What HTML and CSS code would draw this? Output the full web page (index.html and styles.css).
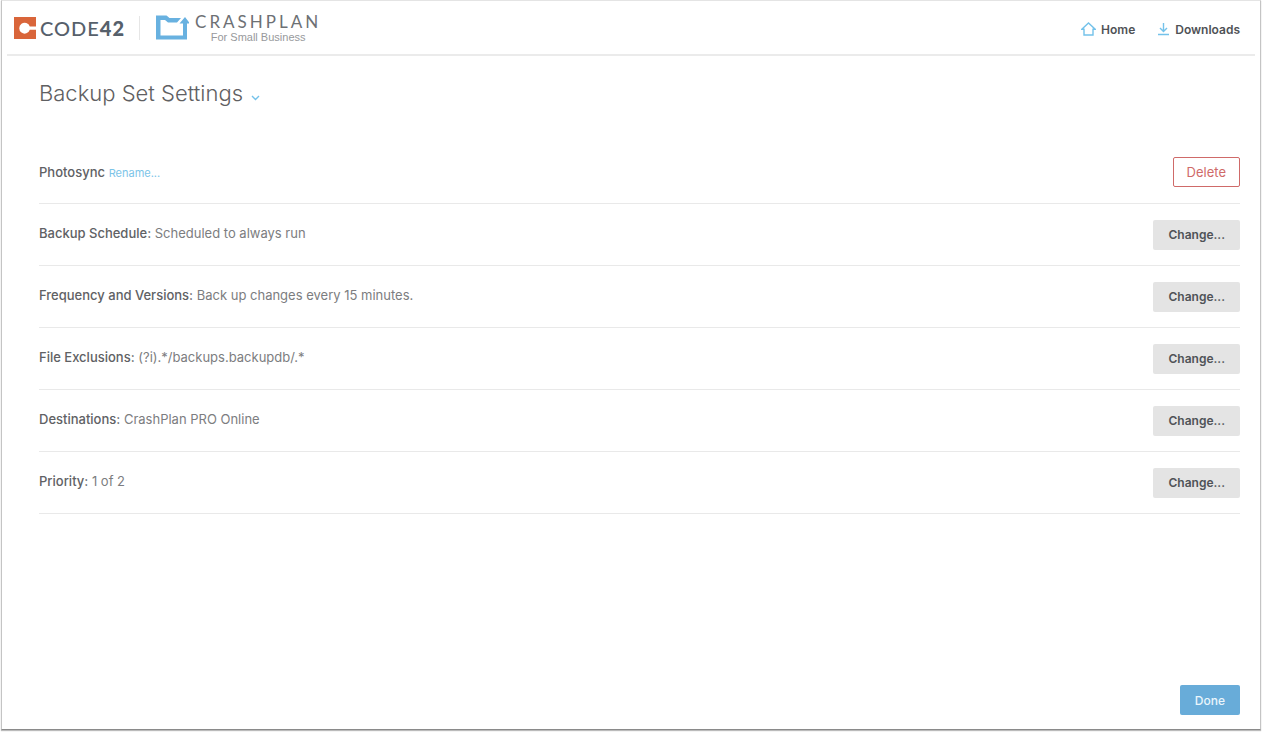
FILE: index.html
```html
<!DOCTYPE html>
<html lang="en">
<head>
  <meta charset="UTF-8" />
  <meta name="viewport" content="width=device-width, initial-scale=1.0"/>
  <title>Backup Set Settings</title>
  <link rel="stylesheet" href="styles.css">
</head>
<body>
  <div class="window">
    <header class="header">
      <div class="brand">
        <a class="code42" href="#">
          <svg width="22" height="22" viewBox="0 0 22 22" aria-hidden="true">
            <path fill="#d9653a" d="M0 0h22v9.6h-6.2a5.4 5.4 0 1 0 0 3.2H22V22H0z"/>
          </svg>
          <span class="code42-name">CODE<b>42</b></span>
        </a>
        <a class="crashplan" href="#">
          <svg width="33" height="25" viewBox="0 0 33 25" aria-hidden="true">
            <path fill="#68b1e0" fill-rule="evenodd" d="M0 .5h10.500l3 2.500H25l-4 4.500h-9l-3-2.500H4.500v15.500h22.500V8.500h-3.500L29 2l5 6.500h-3V24.500H0z"/>
          </svg>
          <span class="crashplan-text">
            <span class="crashplan-name">CRASHPLAN</span>
            <span class="crashplan-sub">For Small Business</span>
          </span>
        </a>
      </div>
      <nav class="nav">
        <a href="#">
          <svg width="15" height="14" viewBox="0 0 15 14" aria-hidden="true">
            <path d="M.8 7.300L7.500 1l6.700 6.300H12V13H3V7.300z"/>
          </svg>
          Home
        </a>
        <a href="#">
          <svg width="13" height="14" viewBox="0 0 13 14" aria-hidden="true">
            <path d="M6.500 1v8.500M3 6l3.500 3.500L10 6M1 12.500h11"/>
          </svg>
          Downloads
        </a>
      </nav>
    </header>

    <main class="content">
      <h1 class="title">
        Backup Set Settings
        <button class="title-menu" type="button" aria-label="Choose backup set">
          <svg width="9" height="6" viewBox="0 0 9 6" aria-hidden="true">
            <path d="M1 1l3.500 3.500L8 1"/>
          </svg>
        </button>
      </h1>

      <!-- Settings of the set, one per row -->
      <ul class="settings">
        <li class="row">
          <p><strong>Photosync</strong> <a class="rename" href="#">Rename...</a></p>
          <button class="btn btn-delete" type="button">Delete</button>
        </li>
        <li class="row">
          <p><strong>Backup Schedule:</strong> Scheduled to always run</p>
          <button class="btn" type="button">Change...</button>
        </li>
        <li class="row">
          <p><strong>Frequency and Versions:</strong> Back up changes every 15 minutes.</p>
          <button class="btn" type="button">Change...</button>
        </li>
        <li class="row">
          <p><strong>File Exclusions:</strong> (?i).*/backups.backupdb/.*</p>
          <button class="btn" type="button">Change...</button>
        </li>
        <li class="row">
          <p><strong>Destinations:</strong> CrashPlan PRO Online</p>
          <button class="btn" type="button">Change...</button>
        </li>
        <li class="row">
          <p><strong>Priority:</strong> 1 of 2</p>
          <button class="btn" type="button">Change...</button>
        </li>
      </ul>

      <div class="footer">
        <button class="btn btn-done" type="button">Done</button>
      </div>
    </main>
  </div>
</body>
</html>
```

FILE: styles.css
```css
* { box-sizing: border-box; }
body {
  margin: 0;
  padding: 0 1px 2px;
  min-height: 100vh;
  display: flex;
  background: #fff;
  font-family: Inter, "Liberation Sans", sans-serif;
  font-size: 13px;
  color: #7c7d80;
}
a { text-decoration: none; }
svg { display: block; flex: none; }
.window {
  flex: 1;
  display: flex;
  flex-direction: column;
  border: 1px solid #c4c4c4;
  border-top-color: #e4e4e4;
  border-bottom-color: #8a8a8a;
  box-shadow: 0 1px 1px #bbb;
}

/* Header */
.header {
  display: flex;
  justify-content: space-between;
  align-items: center;
  height: 55px;
  margin: 0 5px;
  padding: 0 15px 0 7px;
  border-bottom: 2px solid #ebebeb;
}
.brand, .nav, .code42, .crashplan, .nav a {
  display: flex;
  align-items: center;
}
.code42 {
  gap: 4px;
  height: 24px;
  padding-right: 14px;
  border-right: 1px solid #e6e6e6;
  color: #56606b;
}
.code42-name {
  font-family: Lato, sans-serif;
  font-size: 20px;
  line-height: 24px;
  font-weight: 500;
  letter-spacing: 1px;
}
.code42-name b { font-weight: 900; }
.crashplan {
  gap: 6px;
  padding-left: 16px;
}
.crashplan-text {
  display: flex;
  flex-direction: column;
  align-items: center;
}
.crashplan-name {
  font-family: Lato, sans-serif;
  font-size: 17px;
  line-height: 18px;
  letter-spacing: 3px;
  color: #6d7074;
}
.crashplan-sub {
  font-family: "Liberation Sans", sans-serif;
  font-size: 11px;
  line-height: 12px;
  color: #97999c;
}
.nav {
  gap: 22px;
  padding-top: 3px;
}
.nav a {
  gap: 5px;
  font-size: 12px;
  font-weight: 600;
  color: #4f5256;
}
.nav path, .title-menu path {
  fill: none;
  stroke: #74c2ea;
  stroke-width: 1.4;
}

/* Content */
.content {
  flex: 1;
  display: flex;
  flex-direction: column;
  padding: 21px 20px 14px 37px;
}
.title {
  display: flex;
  align-items: center;
  gap: 8px;
  margin: 0 0 47px;
  font-size: 22px;
  line-height: 32px;
  font-weight: 300;
  color: #5f6062;
}
.title-menu {
  margin: 0;
  padding: 10px 0 0;
  border: 0;
  background: none;
  cursor: pointer;
}
.settings {
  margin: 0;
  padding: 0;
  list-style: none;
}
.row {
  display: flex;
  justify-content: space-between;
  align-items: center;
  height: 62px;
  border-bottom: 1px solid #e9e9e9;
}
.row:first-child {
  height: 48px;
  padding-bottom: 16px;
}
.row p {
  margin: 0;
  padding-bottom: 3px;
}
.row:first-child p { padding-bottom: 0; }
.row strong { font-weight: 500; color: #606164; }
.rename { font-size: 11px; color: #7cc4e8; }
.btn {
  height: 30px;
  padding: 0 15px;
  border: 0;
  border-radius: 2px;
  background: #e4e4e4;
  font-family: inherit;
  font-size: 12px;
  font-weight: 600;
  color: #505357;
  cursor: pointer;
}
.btn-delete {
  padding: 0 13px;
  border: 1px solid #cf6a69;
  background: #fff;
  font-size: 13px;
  font-weight: 400;
  color: #cf6a69;
}
.btn-done {
  background: #68acd9;
  font-weight: 500;
  color: #eaf6fc;
}
.footer {
  display: flex;
  justify-content: flex-end;
  margin-top: auto;
}
```
